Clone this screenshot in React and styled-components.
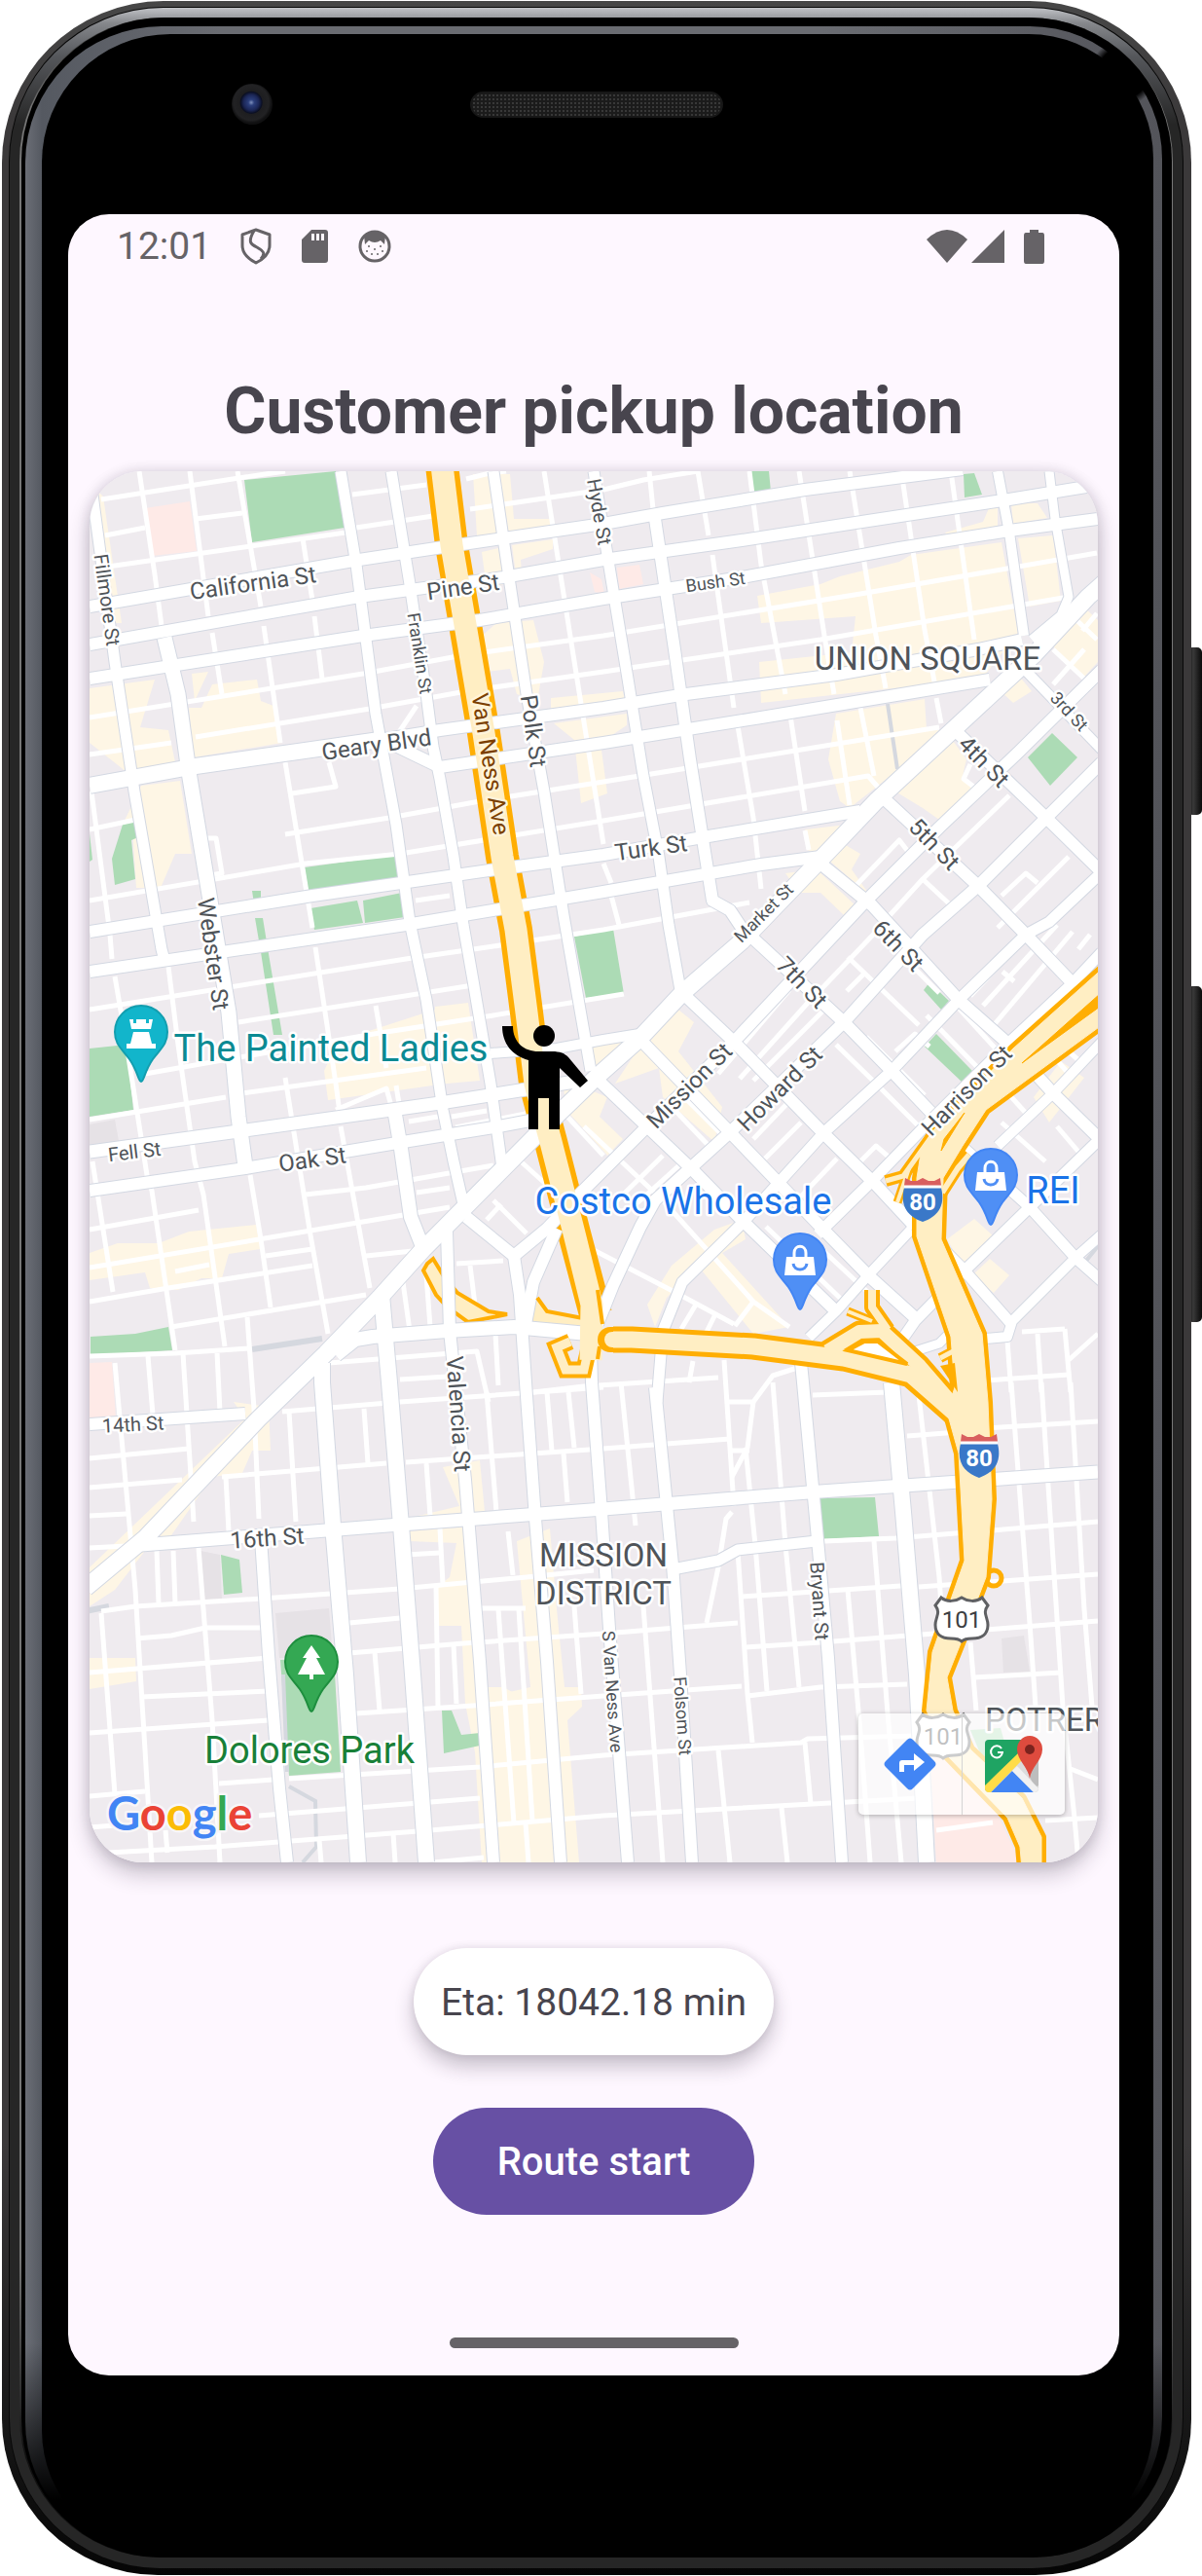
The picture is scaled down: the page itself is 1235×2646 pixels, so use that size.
import React from "react";
import styled, { createGlobalStyle } from "styled-components";

const GlobalStyle = createGlobalStyle`
  * { box-sizing: border-box; }
  body {
    margin: 0;
    background: #ffffff;
    font-family: Roboto, "Liberation Sans", sans-serif;
    color: #48454e;
  }
`;

/* ---------- Device ---------- */

const Device = styled.main`
  position: relative;
  padding: 1px 11px 1px 2px;
`;

const SideKey = styled.span`
  position: absolute;
  right: 0;
  top: ${(p) => p.$top}px;
  width: 13px;
  height: ${(p) => p.$length}px;
  border-radius: 3px 5px 5px 3px;
  background: linear-gradient(90deg, #111 0, #3a3a3a 30%, #1d1d1d 70%, #0b0b0b 100%);
`;

const OuterRim = styled.div`
  position: relative;
  padding: 6px 8px 7px 7px;
  border-radius: 166px 166px 160px 160px;
  background: linear-gradient(#474747 0, #3b393a 120px, #3b393a 2200px, #161616 2500px, #050505 100%);
`;

const Seam = styled.div`
  padding: 1px 1px 0;
  border-radius: 159px 159px 154px 154px;
  background: #080808;
`;

const Band = styled.div`
  padding: 10px 10px 11px;
  border-radius: 158px 158px 154px 154px;
  background: linear-gradient(#c0c2c6 0, #85878b 16px, #55575b 50px, #262626 120px, #262626 100%);
`;

const BandEdge = styled.div`
  padding: 0 1px 0 2px;
  border-radius: 148px 148px 144px 144px;
  background: linear-gradient(#333 0, #777 100px, #777 2300px, #111 2500px);
`;

const GlassEdge = styled.div`
  padding: 9px 10px 3px 4px;
  border-radius: 147px 147px 143px 143px;
  background: #000;
`;

const Highlight = styled.div`
  padding: 8px 9px 0 17px;
  border-radius: 140px 136px 142px 136px;
  background:
    radial-gradient(circle at calc(100% - 40px) 48px, #000 26px, transparent 34px),
    linear-gradient(transparent 2380px, #000 2540px),
    linear-gradient(90deg, #6b6e76 0, #555961 17px, #6a6c72 200px, #6a6c72 70%, #53545a 100%);
`;

const Face = styled.div`
  padding: 0 35px 184px 27px;
  border-radius: 132px 128px 136px 128px;
  background: #000;
`;

const TopBezel = styled.div`
  display: flex;
  align-items: center;
  gap: 203px;
  height: 185px;
  padding: 0 0 41px 168px;
`;

const Camera = styled.span`
  width: 42px;
  height: 42px;
  border-radius: 50%;
  background: radial-gradient(circle at 48% 46%, #7f90bd 0, #2c3f7c 3px, #1b2656 8px, #0b0f22 11px, #1e1e20 12px, #222224 18px, #101011 21px);
`;

const Speaker = styled.span`
  width: 260px;
  height: 27px;
  border: 2px solid #171717;
  border-radius: 14px;
  background:
    radial-gradient(#383838 1px, transparent 1px) 0 0 / 4px 4px,
    #1b1b1b;
`;

const Screen = styled.div`
  display: flex;
  flex-direction: column;
  align-items: center;
  padding: 0 22px 28px;
  border-radius: 42px;
  background: #fef7ff;
`;

/* ---------- Status bar ---------- */

const StatusBar = styled.header`
  display: flex;
  align-self: stretch;
  justify-content: space-between;
  align-items: center;
  height: 66px;
  padding: 0 54px 0 28px;
  color: #666367;
`;

const StatusGroup = styled.div`
  display: flex;
  align-items: center;
  gap: ${(p) => p.$gap}px;
`;

const Clock = styled.time`
  margin-right: 2px;
  font-size: 39px;
  line-height: 46px;
`;

const StatusIcon = styled.svg`
  display: block;
  width: ${(p) => p.$w || 34}px;
  height: 38px;
`;

/* ---------- Content ---------- */

const Title = styled.h1`
  margin: 98px 0 22px;
  font-size: 66px;
  line-height: 78px;
  font-weight: 700;
  text-align: center;
`;

const MapCard = styled.section`
  position: relative;
  align-self: stretch;
  overflow: hidden;
  border-radius: 55px;
  background: #efebef;
`;

const MapShadow = styled.div`
  align-self: stretch;
  border-radius: 55px;
  box-shadow: 0 12px 22px rgba(30, 20, 40, 0.24), 0 0 14px rgba(30, 20, 40, 0.14);
`;

const MapDrawing = styled.svg`
  display: block;
  width: 100%;
  height: auto;
  font-family: Roboto, "Liberation Sans", sans-serif;
`;

const MapTools = styled.div`
  position: absolute;
  right: 34px;
  bottom: 49px;
  display: flex;
  border-radius: 5px;
  background: rgba(255, 255, 255, 0.68);
  box-shadow: 0 1px 5px rgba(0, 0, 0, 0.28);
`;

const MapTool = styled.button`
  display: grid;
  place-items: center;
  width: 106px;
  height: 104px;
  padding: 0;
  border: 0;
  background: transparent;

  & + & {
    border-left: 1px solid #d4d4d4;
  }
`;

const ToolIcon = styled.svg`
  display: block;
  width: 60px;
  height: 60px;
`;

const Eta = styled.p`
  margin: 88px 0 54px;
  padding: 33px 28px 31px;
  border-radius: 55px;
  background: #fff;
  box-shadow: 0 12px 20px rgba(30, 20, 40, 0.24), 0 0 8px rgba(30, 20, 40, 0.1);
  font-size: 39px;
  line-height: 46px;
`;

const StartButton = styled.button`
  padding: 33px 66px 31px;
  border: 0;
  border-radius: 55px;
  background: #6750a4;
  color: #fff;
  font: 500 40px/46px Roboto, "Liberation Sans", sans-serif;
`;

const HomeBar = styled.span`
  width: 297px;
  height: 11px;
  margin-top: 126px;
  border-radius: 6px;
  background: #666367;
`;

/* ---------- Map data ---------- */

const GREEN = "#acdbb5";
const TAN = "#fef6e5";
const PINK = "#feeae7";
const GRAY = "#e6e2e6";

const areas = [
  [TAN, "96 500 106 510 125 640 112 640"],
  [TAN, "92 707 159 698 144 747 173 750 180 783 130 793 92 763"],
  [TAN, "197 692 214 690 200 720"],
  [TAN, "218 703 264 698 268 720 281 725 290 763 199 778 194 727 207 727"],
  [TAN, "145 807 185 802 197 877 180 877 165 912 140 912 136 850 127 845"],
  [TAN, "486 487 524 487 528 533 565 533 565 543 490 550"],
  [TAN, "495 567 512 563 518 600 500 605"],
  [TAN, "526 560 568 554 568 564 535 575 536 590 530 590"],
  [TAN, "510 640 548 637 559 680 552 720 531 713 524 687 500 690 493 655"],
  [TAN, "566 717 640 710 642 720 566 730"],
  [TAN, "569 743 644 733 644 745 617 763 624 815 597 825 590 760"],
  [TAN, "333 1100 340 1085 376 1060 447 1037 447 1034 481 1030 493 1110 459 1113 337 1130"],
  [TAN, "92 1287 121 1277 163 1277 194 1265 263 1258 268 1283 235 1288 228 1313 207 1313 183 1325 154 1323 149 1307 92 1315"],
  [TAN, "778 612 843 600 863 592 924 577 936 570 1029 557 1046 650 1009 697 782 722 780 680 875 670 879 633 782 640"],
  [TAN, "1046 553 1082 550 1090 617 1058 623"],
  [TAN, "1039 517 1066 517 1076 532 1041 538"],
  [TAN, "971 547 1010 536 1017 520 1025 520 1025 540 975 552"],
  [TAN, "859 733 950 718 952 750 965 750 920 793 873 830 863 823 851 780"],
  [TAN, "920 813 977 758 993 780 989 797 1001 810 965 842 948 830"],
  [TAN, "1025 707 1046 693 1060 710 1041 722"],
  [TAN, "1112 622 1128 637 1128 680 1114 695 1078 660"],
  [TAN, "827 852 871 847 839 877 829 873"],
  [TAN, "851 883 867 867 884 877 875 893 894 920"],
  [TAN, "807 897 821 917 843 917 867 940 879 930 839 893"],
  [TAN, "665 1063 697 1037 713 1050 697 1080 742 1137 734 1173 681 1127 677 1097 632 1113"],
  [TAN, "608 1075 640 1070 625 1092 612 1096"],
  [TAN, "579 1120 600 1117 624 1127 616 1147 640 1170 624 1187 600 1160 586 1145"],
  [TAN, "665 1340 690 1300 734 1263 762 1253 766 1273 742 1287 811 1363 774 1370 717 1300 685 1333 673 1363"],
  [TAN, "973 1273 1001 1252 1021 1270 989 1300"],
  [TAN, "999 1310 1017 1293 1037 1310 1021 1328"],
  [TAN, "1062 1127 1090 1090 1114 1107 1078 1153"],
  [TAN, "92 1610 252 1457 240 1440 276 1445 278 1490 259 1490 249 1513 218 1517 176 1577 149 1593 118 1633 92 1650"],
  [TAN, "455 1507 493 1500 498 1553 417 1560 472 1547"],
  [TAN, "419 1573 486 1568 493 1633 499 1733 517 1733 530 1740 540 1913 495 1913 488 1800 478 1750 474 1670 450 1670 449 1630 462 1620 469 1585 421 1583"],
  [TAN, "531 1583 565 1570 572 1653 580 1733 597 1733 598 1753 583 1767 595 1913 495 1913 515 1740 545 1733"],
  [TAN, "92 1703 139 1703 140 1727 92 1735"],
  [PINK, "149 522 195 515 202 566 156 571"],
  [PINK, "634 583 657 580 661 600 636 605"],
  [PINK, "606 588 618 595 621 610 611 608"],
  [PINK, "92 1400 115 1399 119 1457 92 1457"],
  [PINK, "955 1790 1000 1810 1048 1913 962 1913"],
  [GRAY, "1029 1683 1052 1680 1058 1717 1031 1718"],
  [GRAY, "283 1657 338 1652 342 1703 287 1703"],
  [GRAY, "206 1593 226 1597 228 1642 209 1643"],
  [GRAY, "92 1155 118 1150 122 1172 92 1178"],
  [GREEN, "251 493 345 484 354 542 259 557"],
  [GREEN, "126 847 139 843 142 860 135 863 139 903 118 909 115 882"],
  [GREEN, "92 856 95 883 92 885"],
  [GREEN, "313 891 407 878 412 903 317 918"],
  [GREEN, "319 933 367 925 373 948 323 955"],
  [GREEN, "373 925 413 917 416 942 375 948"],
  [GREEN, "259 915 268 915 268 927 261 928"],
  [GREEN, "262 943 270 943 276 980 290 1063 281 1063 268 978"],
  [GREEN, "92 1077 130 1073 137 1140 92 1147"],
  [GREEN, "93 1373 139 1370 173 1363 177 1387 93 1392"],
  [GREEN, "590 962 630 954 641 1021 602 1025"],
  [GREEN, "771 484 790 484 792 505 774 507"],
  [GREEN, "990 487 1001 486 1009 508 991 511"],
  [GREEN, "1081 753 1107 778 1079 807 1056 778"],
  [GREEN, "955 1009 975 1028 967 1037 949 1017"],
  [GREEN, "962 1062 999 1100 989 1112 950 1075"],
  [GREEN, "227 1597 246 1602 249 1636 230 1638"],
  [GREEN, "288 1705 343 1703 350 1820 297 1824"],
  [GREEN, "454 1757 464 1757 474 1782 493 1780 493 1793 456 1801"],
  [GREEN, "841 1539 899 1538 903 1578 845 1581"],
  [GREEN, "997 1777 1028 1775 1035 1800 1015 1820"],
];

const lanes = [
  // north-west, east-west lanes
  "104 513 252 490 293 484", "108 550 149 542", "201 533 249 527", "111 582 355 547",
  "362 508 438 498", "479 492 503 486 520 484", "366 542 445 530", "483 523 620 503 661 493 717 484",
  "92 737 373 692 476 673 620 653 884 610 1127 568", "92 775 176 763", "201 757 380 728 479 710 620 690 843 657 1098 613",
  "92 852 139 842", "300 815 345 808 338 783", "293 857 400 840 493 823 620 803 965 747",
  "92 925 314 887 411 877 620 843 892 797 905 812", "92 1037 417 985 507 972 620 955 770 927",
  "245 1050 486 1012", "149 1103 384 1062 507 1043 641 1021", "249 1123 438 1097", "92 1150 232 1127",
  "314 1227 376 1220 507 1197", "428 1225 462 1220", "92 1263 204 1243", "92 1302 266 1273 462 1240",
  "273 1290 321 1283", "376 1290 424 1285", "92 1337 173 1323 321 1300", "176 1363 376 1330", "92 1393 180 1390 256 1385",
  "212 861 222 861 228 897 216 899", "427 925 462 920", "345 1140 397 1118 402 1136", "407 1115 410 1134",
  "420 1152 450 1147", "464 1147 500 1141", "468 1158 550 1142", "180 1306 215 1299",
  // north-west, north-south lanes
  "143 484 159 590 166 643", "195 484 214 633", "218 650 228 713", "244 484 268 623", "271 643 288 763",
  "293 783 321 953", "324 973 345 1113 350 1150", "311 553 321 617", "323 633 331 697", "559 484 597 723 620 867",
  "118 1003 130 1073 151 1207 156 1223 180 1387", "95 1193 116 1327", "293 1107 318 1263 337 1370",
  "350 1157 380 1323", "386 1033 397 1097", "94 813 113 960 115 985", "173 993 183 1073 200 1193 209 1227 231 1383",
  "257 1207 268 1273 278 1343", "414 1317 421 1367", "438 1310 442 1363", "483 1300 488 1340", "469 1298 517 1295",
  "428 725 410 752",
  // south-west
  "118 1400 139 1633 156 1913", "152 1393 157 1453", "188 1390 199 1563", "204 1590 218 1767 226 1913",
  "223 1390 226 1450", "254 1353 261 1447 266 1560", "297 1450 304 1563", "232 1517 235 1573", "104 1657 118 1843",
  "161 1593 163 1647", "178 1593 180 1647", "374 1447 378 1503", "438 1503 442 1557", "500 1430 510 1553",
  "452 1570 455 1627", "448 1630 450 1753", "466 1690 469 1750", "512 1653 528 1873", "533 1653 547 1870",
  "540 1873 543 1913", "385 1697 390 1757", "579 1493 583 1543", "590 1650 597 1740", "404 1883 406 1913",
  "328 1890 330 1913", "170 1880 172 1903", "562 1430 567 1490", "584 1430 590 1487", "522 1573 527 1618",
  "92 1498 194 1488", "92 1528 187 1520", "228 1517 397 1503", "417 1502 620 1488 750 1478", "290 1450 411 1440 620 1425",
  "92 1557 130 1555", "92 1590 130 1588", "104 1655 139 1650 269 1642 411 1632 541 1620 610 1613",
  "140 1683 176 1680 211 1672 269 1672", "359 1667 411 1662", "92 1718 276 1703", "359 1698 476 1688 620 1678 758 1667",
  "145 1743 276 1737", "92 1780 276 1767", "366 1760 486 1752 620 1742 762 1732", "225 1832 280 1828",
  "297 1827 493 1815 620 1803 823 1790 830 1786 940 1783", "92 1845 149 1840", "266 1865 493 1847",
  "92 1877 118 1875", "111 1903 221 1897 442 1880 620 1865 944 1847", "445 1913 497 1908", "417 1597 452 1595",
  "493 1652 540 1652", "338 1400 490 1388 502 1440", "411 1417 459 1414", "509 1370 512 1423", "548 1430 600 1424 738 1415",
  // south-east
  "762 1640 940 1628", "766 1692 843 1687 1128 1665", "768 1742 843 1733 932 1730", "847 1583 920 1580 1128 1563",
  "944 1630 1128 1617", "932 1475 985 1471", "1013 1467 1128 1460", "835 1433 912 1430", "1001 1723 1090 1718",
  "748 1440 774 1440 794 1413 819 1405", "638 1420 653 1567", "661 1650 681 1913", "744 1397 754 1547",
  "766 1487 776 1587 788 1737", "794 1420 807 1587 821 1733", "752 1490 770 1490", "774 1440 768 1487 752 1517",
  "752 1553 746 1560 738 1610 726 1667", "758 1593 768 1740 773 1790", "738 1798 750 1913", "803 1857 809 1913",
  "827 1790 833 1853", "871 1633 884 1780 894 1913", "898 1583 912 1760 926 1913", "944 1433 965 1620 967 1650",
  "997 1687 1003 1757", "1039 1420 1058 1667 1064 1753", "1070 1420 1092 1753 1104 1867", "1100 1420 1114 1653 1122 1753",
  "1035 1377 1039 1430", "1066 1370 1070 1430", "1094 1365 1100 1430", "1050 1368 1094 1365", "1013 1418 1098 1412",
  "1098 1397 1128 1370", "1074 1870 1128 1867", "1100 1817 1128 1828", "962 1880 1020 1872", "1104 1867 1108 1913",
  // north-east
  "667 484 671 523", "717 484 728 550", "732 570 754 727", "757 740 774 840 782 913", "770 484 782 580 807 713",
  "812 735 827 833", "821 484 847 653 857 713", "860 740 873 827", "873 484 900 653 910 707", "926 484 950 647 960 700",
  "977 484 1001 657", "884 727 898 797", "962 717 967 743", "827 853 831 873", "620 887 628 907", "628 920 636 950",
  // south of market alleys
  "879 910 924 863 934 876", "1037 817 948 903 908 947", "948 903 977 930", "1098 880 1025 953", "1029 920 1054 897 1066 907",
  "1102 633 1127 657", "1127 630 1112 648", "1082 703 1114 667", "1082 667 1114 697", "997 785 990 800 1003 810",
  "811 1017 738 1103", "851 1033 774 1110", "830 1030 760 1108", "900 957 840 1020", "871 983 944 1053", "908 963 965 1020",
  "888 1000 870 1018", "930 985 880 1040", "859 1073 900 1113 944 1157", "952 1043 1005 1097", "980 1030 1030 1085",
  "890 1065 950 1125", "1066 950 997 1023", "1086 950 1010 1033", "1102 957 1021 1053", "1030 998 1042 1008", "1120 960 1108 975",
  "884 1193 900 1177 915 1190", "815 1127 774 1170", "823 1153 786 1190", "840 1170 800 1213", "860 1190 820 1232",
  "693 1140 734 1183", "706 1130 748 1172", "600 1157 681 1233 774 1337 811 1363", "608 1283 693 1327 754 1360",
  "681 1187 632 1235", "700 1195 650 1240", "1033 1120 1060 1150", "1029 1153 1074 1193", "1086 1157 1114 1190", "1090 1073 1115 1095",
  "1060 1060 1100 1105", "715 1340 700 1365", "735 1350 725 1370", "774 1337 755 1362", "787 1260 870 1340", "830 1270 900 1335",
  "535 1193 565 1220", "507 1233 541 1267", "500 1253 515 1237", "583 1147 620 1187", "712 1398 708 1420", "920 1080 940 1062 955 1075",
];

const streets = [
  [9, "1078 484 1084 533 1098 613 1090 632 1060 657"],
  [11, "92 484 97 523 118 680 138 813 166 975 170 990"],
  [15, "169 655 183 713 194 793 214 913 235 1040 245 1147 252 1198"],
  [11, "350 484 366 580 386 733 407 847 421 947 438 1027 455 1140 466 1193 479 1250"],
  [11, "402 484 421 600 438 713 445 767 452 800 466 880 476 950 486 1007 504 1113 516 1200"],
  [11, "507 484 521 580 541 713 559 813 579 940 593 1020 607 1100"],
  [11, "610 484 624 570 645 697 661 797 677 880 687 950 699 1017"],
  [12, "673 533 693 667 709 780 732 925 750 935 762 953 867 1050 916 1100 956 1142"],
  [12, "92 623 369 575 455 562 620 538 681 527 827 503 989 482"],
  [12, "92 662 369 613 517 593 620 575 762 555 892 535 1037 513 1128 498"],
  [12, "92 697 373 653 493 637 620 615 762 593 924 563 1037 545 1128 533"],
  [16, "92 807 201 787 390 760"],
  [12, "390 760 452 750 620 727 705 713 859 693 1005 667 1050 657"],
  [12, "390 758 452 788 620 763 782 737 1017 698"],
  [12, "92 957 321 920 510 893 620 878 722 860 884 833"],
  [12, "92 998 417 950 620 916 782 888 843 880"],
  [13, "92 1183 245 1162 452 1133 597 1110"],
  [12, "92 1223 252 1200 414 1173 507 1158 560 1148"],
  [10, "504 1082 572 1077 620 1068 657 1062"],
  [14, "406 1145 412 1180 422 1250 435 1283"],
  [10, "1025 484 1037 547 1052 653"],
  [12, "1132 688 1046 773 965 850 892 923 754 1070 665 1157 600 1222 562 1262 528 1290 479 1250"],
  [12, "1132 783 1078 837 1005 910 948 960 867 1050 750 1163 673 1233 658 1260 630 1320 614 1360"],
  [11, "1132 896 1078 947 1054 960 985 1027 916 1100 847 1163 762 1257 701 1317 681 1367 675 1440"],
  [11, "1132 978 1102 1010 1041 1067 952 1155 896 1213 840 1268"],
  [10, "1132 1070 1082 1123 1025 1177"],
  [10, "936 1263 892 1310 859 1347 831 1374"],
  [11, "1132 1168 1058 1240 989 1307 940 1357 924 1380"],
  [10, "1132 1268 1106 1291 1040 1357 1035 1373 1012 1375"],
  [9, "940 1388 965 1380 975 1370"],
  [10, "1055 690 1132 770"],
  [12, "981 750 1078 843 1132 896"],
  [12, "908 820 1005 910 1054 960 1102 1010 1132 1038"],
  [12, "843 887 896 930 985 1027 1037 1073 1082 1123 1132 1172"],
  [11, "989 1178 1058 1240 1106 1293 1132 1316"],
  [12, "701 1020 754 1070 847 1165 900 1217 940 1260"],
  [11, "969 1283 989 1303 1041 1362"],
  [12, "657 1067 750 1163 843 1260 892 1310 944 1357"],
  [12, "612 1107 713 1203 762 1253 859 1347"],
  [12, "528 1290 534 1330 540 1420 550 1560 562 1707 576 1913"],
  [12, "572 1262 548 1317 540 1360"],
  [14, "345 1392 365 1376 383 1373 459 1367 528 1363 604 1370"],
  [16, "331 1400 331 1420 342 1567 355 1720 368 1913"],
  [16, "392 1330 400 1420 412 1567 424 1720 438 1913"],
  [12, "459 1265 462 1367 478 1520 493 1707 507 1913"],
  [12, "607 1385 608 1420 618 1553 626 1673 645 1913"],
  [12, "673 1425 691 1607 699 1720 711 1913"],
  [12, "823 1400 825 1420 839 1570 851 1703 865 1913"],
  [16, "916 1420 928 1553 942 1720 952 1913"],
  [12, "268 1580 276 1700 287 1837 295 1913"],
  [12, "92 1463 252 1452"],
  [13, "145 1587 335 1572 411 1566 620 1550 843 1532 1128 1512"],
  [11, "691 1612 738 1603 758 1592 839 1583"],
  [17, "88 1631 149 1580 266 1457 335 1390 390 1333 435 1283 552 1165 612 1107 657 1067 701 1020 762 967 839 887 900 823 1062 673 1118 613 1135 598"],
];

const freewayOutline =
  "M1136 992 L1041 1077 L960 1160 L946 1185 L942 1210 L942 1270 L977 1373 L981 1425 L973 1450 L985 1493 L991 1603 L958 1697 L952 1757 L973 1803 L1035 1867 L1048 1897 L1050 1920 L1070 1920 L1070 1887 L1050 1847 L997 1797 L979 1757 L973 1723 L989 1683 L1013 1620 L1019 1540 L1015 1440 L1009 1370 L967 1273 L969 1210 L989 1177 L1013 1140 L1136 1050 Z";

const ramps = [
  [27, 17, "630 1376 649 1376 774 1383 867 1395 936 1412 985 1455"],
  [23, 14, "850 1388 883 1368 906 1367 945 1403 990 1455"],
  [16, 8, "896 1325 896 1343 912 1366"],
  [9, 4, "871 1347 896 1357"],
  [12, 5, "958 1166 928 1208 910 1213"],
  [9, 4, "934 1200 922 1235"],
  [12, 6, "996 1186 984 1200 968 1225"],
  [10, 5, "985 1385 966 1395"],
];

const labels = [
  [261, 607, -8, 24, "California St"],
  [477, 611, -8, 24, "Pine St"],
  [388, 773, -8, 24, "Geary Blvd"],
  [103, 617, 82, 20, "Fillmore St"],
  [425, 672, 81, 18, "Franklin St"],
  [609, 527, 80, 20, "Hyde St"],
  [540, 752, 82, 24, "Polk St"],
  [736, 604, -8, 18, "Bush St"],
  [670, 879, -8, 24, "Turk St"],
  [1094, 735, 47, 18, "3rd St"],
  [1005, 788, 46, 24, "4th St"],
  [954, 873, 46, 24, "5th St"],
  [917, 977, 46, 24, "6th St"],
  [818, 1015, 46, 24, "7th St"],
  [789, 942, -45, 18, "Market St"],
  [714, 1121, -45, 24, "Mission St"],
  [807, 1124, -45, 24, "Howard St"],
  [999, 1126, -45, 24, "Harrison St"],
  [211, 981, 82, 24, "Webster St"],
  [139, 1190, -7, 20, "Fell St"],
  [322, 1199, -8, 24, "Oak St"],
  [463, 1453, 86, 24, "Valencia St"],
  [137, 1470, -3, 20, "14th St"],
  [275, 1588, -4, 24, "16th St"],
  [623, 1738, 86, 18, "S Van Ness Ave"],
  [695, 1763, 86, 18, "Folsom St"],
  [835, 1645, 86, 20, "Bryant St"],
  [953, 688, 0, 33, "UNION SQUARE"],
  [620, 1609, 0, 33, "MISSION"],
  [620, 1648, 0, 33, "DISTRICT"],
];

const toPath = (points) => "M" + points;

function MapLabel({ x, y, turn = 0, size, color = "#4f5459", anchor = "middle", halo = "#ffffff", children }) {
  return (
    <text
      transform={`translate(${x} ${y}) rotate(${turn})`}
      fontSize={size}
      fill={color}
      textAnchor={anchor}
      stroke={halo}
      strokeWidth="5"
      strokeLinejoin="round"
      paintOrder="stroke"
    >
      {children}
    </text>
  );
}

function Pin({ x, y, fill, edge, children }) {
  return (
    <g transform={`translate(${x} ${y})`}>
      <path
        d="M0 51C-3 51-3 41-12 28C-20 17-27 13-27 0A27 27 0 1 1 27 0C27 13 20 17 12 28C3 41 3 51 0 51Z"
        fill={fill}
        stroke={edge}
        strokeWidth="2"
      />
      {children}
    </g>
  );
}

function Bag() {
  return (
    <g>
      <path d="M-14-3H14L16 16H-16Z" fill="#fff" />
      <path d="M-6-2V-7C-6-16 6-16 6-7V-2" fill="none" stroke="#fff" strokeWidth="3" />
      <path d="M-7 4C-6 12 6 12 7 4" fill="none" stroke="#4f8ff5" strokeWidth="3" />
    </g>
  );
}

function Interstate({ x, y }) {
  return (
    <g transform={`translate(${x} ${y})`}>
      <path d="M-19-12C-24 8-14 18 0 23C14 18 24 8 19-12Z" fill="#3a78c8" />
      <path d="M-18-22L-12-19L-6-19L0-22L6-19L12-19L18-22L19-14H-19Z" fill="#d95f5f" />
      <path d="M-19-13H19" stroke="#fff" strokeWidth="3" />
      <text y="11" textAnchor="middle" fontSize="24" fontWeight="700" fill="#fff">80</text>
    </g>
  );
}

function UsRoute({ x, y }) {
  return (
    <g transform={`translate(${x} ${y})`}>
      <path
        d="M-21-22C-15-17-6-18 0-22C6-18 15-17 21-22L27-14C21-6 27-2 27 6C27 16 20 20 11 20C5 20 2 21 0 23C-2 21-5 20-11 20C-20 20-27 16-27 6C-27-2-21-6-27-14Z"
        fill="#fff"
        stroke="#5f6063"
        strokeWidth="3"
      />
      <text y="9" textAnchor="middle" fontSize="24" fill="#3c3e42">101</text>
    </g>
  );
}

function CityMap() {
  return (
    <MapDrawing viewBox="92 484 1036 1429" role="img" aria-label="Map of San Francisco">
      <rect x="92" y="484" width="1036" height="1429" fill="#efebef" />
      {areas.map(([fill, points]) => (
        <polygon key={points} points={points} fill={fill} />
      ))}
      <path d="M259 1386L331 1375M88 1655L112 1650" stroke="#d5d8df" strokeWidth="6" />
      <path d="M297 1835L324 1850L325 1897L311 1913M912 723L922 790M291 1720L295 1820M1128 1280L1112 1300" stroke="#d5d8df" strokeWidth="4" fill="none" />

      <g fill="none" stroke="#fff" strokeWidth="5" strokeLinejoin="round">
        {lanes.map((points) => (
          <path key={points} d={toPath(points)} />
        ))}
      </g>

      {/* ramps that pass under the streets */}
      <path d="M439 1298L445 1293L456 1311L470 1328L502 1347L521 1350L481 1358L459 1342L448 1330L435 1305Z" fill="#ffeec3" stroke="#ffae03" strokeWidth="4" />
      <path d="M552 1333L562 1347L600 1354L600 1366L545 1362Z" fill="#ffeec3" />
      <path d="M454 478L464 560L476 630L497 753L516 880L530 955L541 1040L550 1113L566 1173L590 1267L612 1350" fill="none" stroke="#ffae03" strokeWidth="34" />

      <g fill="none" stroke="#d3d8e2" strokeLinejoin="round">
        {streets.map(([width, points]) => (
          <path key={points} d={toPath(points)} strokeWidth={width + 2} />
        ))}
      </g>
      <g fill="none" stroke="#fff" strokeLinejoin="round">
        {streets.map(([width, points]) => (
          <path key={points} d={toPath(points)} strokeWidth={width} />
        ))}
      </g>

      <path d="M552 1333L562 1347L604 1355" fill="none" stroke="#ffae03" strokeWidth="4" />
      <path d="M586 1378L572 1384L581 1407L600 1407L606 1380" fill="none" stroke="#ffae03" strokeWidth="17" />
      <path d="M586 1378L572 1384L581 1407L600 1407L606 1380" fill="none" stroke="#ffeec3" strokeWidth="9" />
      <path d="M454 478L464 560L476 630L497 753L516 880L530 955L541 1040L550 1113L566 1173L590 1267L608 1340L607 1397" fill="none" stroke="#ffeec3" strokeWidth="23" />
      <path d="M614 1325L619 1360M616 1383L614 1396" stroke="#ffae03" strokeWidth="4" />

      {/* freeways */}
      <g fill="none" stroke="#ffae03" strokeLinejoin="round">
        <circle cx="1021" cy="1621" r="8" strokeWidth="5" />
        <path d={freewayOutline} strokeWidth="10" />
        {ramps.map(([outer, , points]) => (
          <path key={points} d={toPath(points)} strokeWidth={outer} />
        ))}
        <path d="M634 1376H627" strokeWidth="26" strokeLinecap="round" />
      </g>
      <g fill="none" stroke="#ffeec3" strokeLinejoin="round">
        <path d={freewayOutline} fill="#ffeec3" strokeWidth="1" />
        {ramps.map(([, inner, points]) => (
          <path key={points} d={toPath(points)} strokeWidth={inner} />
        ))}
        <path d="M634 1376H629" strokeWidth="16" strokeLinecap="round" />
      </g>
      <path d="M871 1387L888 1378H902L932 1401Z" fill="#fff" stroke="#ffae03" strokeWidth="4" />
      <path d="M966 1403L981 1400L984 1430Z" fill="#ffae03" />
      <path d="M1130 1021V1034L1050 1092ZM991 1143L967 1182L970 1170Z" fill="#ffae03" stroke="#ffae03" />

      {labels.map(([x, y, turn, size, text]) => (
        <MapLabel key={text} x={x} y={y} turn={turn} size={size}>{text}</MapLabel>
      ))}
      <MapLabel x={496} y={786} turn={81} size={24} color="#7b3f00" halo="#fff4da">Van Ness Ave</MapLabel>
      <MapLabel x={1012} y={1778} size={33} anchor="start">POTRER</MapLabel>
      <MapLabel x={340} y={1090} size={38} color="#0b8a93">The Painted Ladies</MapLabel>
      <MapLabel x={702} y={1247} size={38} color="#1a73e8">Costco Wholesale</MapLabel>
      <MapLabel x={1082} y={1236} size={38} color="#1a73e8">REI</MapLabel>
      <MapLabel x={318} y={1811} size={38} color="#188038">Dolores Park</MapLabel>

      <Interstate x={948} y={1232} />
      <Interstate x={1006} y={1495} />
      <UsRoute x={988} y={1663} />
      <UsRoute x={969} y={1783} />

      <Pin x={145} y={1060} fill="#12b5cb" edge="#129eaf">
        <path d="M-12-13H-8V-9H-5V-13H5V-9H8V-13H12L10-3H-10ZM-8 0H8L11 12H15V17H-15V12H-11Z" fill="#fff" />
      </Pin>
      <Pin x={320} y={1707} fill="#34a853" edge="#1e8e3e">
        <path d="M0-17L9-4H5L14 13H2V18H-2V13H-14L-5-4H-9Z" fill="#fff" />
      </Pin>
      <Pin x={822} y={1294} fill="#4f8ff5" edge="#4285f4"><Bag /></Pin>
      <Pin x={1018} y={1207} fill="#4f8ff5" edge="#4285f4"><Bag /></Pin>

      {/* customer marker */}
      <circle cx="559" cy="1064" r="11" />
      <path d="M516 1054H527C527 1071 539 1080 553 1080H567C576 1080 580 1082 584 1086L604 1110L596 1117L575 1097V1160H564V1128H553V1160H543V1089C526 1084 516 1072 516 1054Z" />

      <text x="110" y="1880" fontFamily="Lato, Roboto, sans-serif" fontSize="47" fontWeight="700" stroke="#f8f6f8" strokeWidth="5" strokeLinejoin="round" paintOrder="stroke">
        <tspan fill="#4285f4">G</tspan>
        <tspan fill="#ea4335">o</tspan>
        <tspan fill="#fbbc05">o</tspan>
        <tspan fill="#4285f4">g</tspan>
        <tspan fill="#34a853">l</tspan>
        <tspan fill="#ea4335">e</tspan>
      </text>
    </MapDrawing>
  );
}

function DirectionsIcon() {
  return (
    <ToolIcon viewBox="0 0 60 60" aria-hidden="true">
      <path d="M27 5Q30 2 33 5L55 27Q58 30 55 33L33 55Q30 58 27 55L5 33Q2 30 5 27Z" fill="#4285f4" />
      <path d="M19 38V29Q19 26 22 26H34V19L45 28L34 37V31H24V38Z" fill="#fff" />
    </ToolIcon>
  );
}

function MapsIcon() {
  return (
    <ToolIcon viewBox="0 0 60 60" aria-hidden="true">
      <rect x="0" y="5" width="55" height="54" rx="4" fill="#dcdcdc" />
      <path d="M4 5H40L36 24L1 57Q0 56 0 54V9Q0 5 4 5Z" fill="#1fa463" />
      <path d="M41 32L55 20V52L51 54Z" fill="#bdbdbd" />
      <path d="M6 59L28 37L50 59Z" fill="#4285f4" />
      <path d="M0 52L34 19L39 25L6 59H3Q0 58 0 55Z" fill="#ffdc48" />
      <path d="M28 37L33 32L55 55Q54 59 50 59Z" fill="#f1f1f1" />
      <path d="M46 45C45 34 33 26 33 15A13 14 0 0 1 59 15C59 26 47 34 46 45Z" fill="#de4b3e" />
      <circle cx="46" cy="15" r="5" fill="#7b231e" />
      <path d="M17 14A6 6 0 1 0 18 18H13" fill="none" stroke="#fff" strokeWidth="2" />
    </ToolIcon>
  );
}

function StatusRow() {
  return (
    <StatusBar>
      <StatusGroup $gap={27}>
        <Clock>12:01</Clock>
        <StatusIcon viewBox="0 0 34 38" aria-hidden="true">
          <path d="M17 2L31 7V18C31 26 25 32 17 36C9 32 3 26 3 18V7ZM15 3C8 15 12 17 18 20C25 24 27 26 22 32" fill="none" stroke="currentColor" strokeWidth="3" strokeLinejoin="round" />
        </StatusIcon>
        <StatusIcon viewBox="0 0 34 38" aria-hidden="true">
          <path fillRule="evenodd" fill="currentColor" d="M13 2H27Q30 2 30 5V33Q30 36 27 36H6Q3 36 3 33V12ZM13 6V13H16V6ZM18 6V13H21V6ZM23 6V13H26V6Z" />
        </StatusIcon>
        <StatusIcon viewBox="0 0 34 38" aria-hidden="true">
          <circle cx="17" cy="19" r="15" fill="none" stroke="currentColor" strokeWidth="3" />
          <path d="M6 8Q17-1 28 8L27 17L23 13Q17 17 11 13L7 17Z" fill="currentColor" />
          <g fill="currentColor">
            <circle cx="11" cy="19" r="1" /><circle cx="23" cy="19" r="1" /><circle cx="17" cy="22" r="1" />
            <circle cx="9" cy="24" r="1" /><circle cx="14" cy="27" r="1" /><circle cx="20" cy="27" r="1" /><circle cx="25" cy="24" r="1" />
          </g>
        </StatusIcon>
      </StatusGroup>
      <StatusGroup $gap={4}>
        <StatusIcon $w={42} viewBox="0 0 42 38" aria-hidden="true">
          <path d="M0 12Q21-8 42 12L21 36Z" fill="currentColor" />
        </StatusIcon>
        <StatusIcon viewBox="0 0 34 38" aria-hidden="true">
          <path d="M34 2V36H0Z" fill="currentColor" />
        </StatusIcon>
        <StatusIcon $w={38} viewBox="0 0 38 38" aria-hidden="true">
          <path d="M22 2H31V5H35Q37 5 37 8V34Q37 37 35 37H18Q16 37 16 34V8Q16 5 18 5H22Z" fill="currentColor" />
        </StatusIcon>
      </StatusGroup>
    </StatusBar>
  );
}

function PhoneShell({ children }) {
  return (
    <Device>
      <SideKey $top={665} $length={172} />
      <SideKey $top={1013} $length={345} />
      <OuterRim>
        <Seam>
          <Band>
            <BandEdge>
              <GlassEdge>
                <Highlight>
                  <Face>
                    <TopBezel>
                      <Camera />
                      <Speaker />
                    </TopBezel>
                    {children}
                  </Face>
                </Highlight>
              </GlassEdge>
            </BandEdge>
          </Band>
        </Seam>
      </OuterRim>
    </Device>
  );
}

export default function App() {
  return (
    <>
      <GlobalStyle />
      <PhoneShell>
        <Screen>
          <StatusRow />
          <Title>Customer pickup location</Title>
          <MapShadow>
            <MapCard>
              <CityMap />
              <MapTools>
                <MapTool type="button" aria-label="Directions"><DirectionsIcon /></MapTool>
                <MapTool type="button" aria-label="Open in Maps"><MapsIcon /></MapTool>
              </MapTools>
            </MapCard>
          </MapShadow>
          <Eta>Eta: 18042.18 min</Eta>
          <StartButton type="button">Route start</StartButton>
          <HomeBar />
        </Screen>
      </PhoneShell>
    </>
  );
}
